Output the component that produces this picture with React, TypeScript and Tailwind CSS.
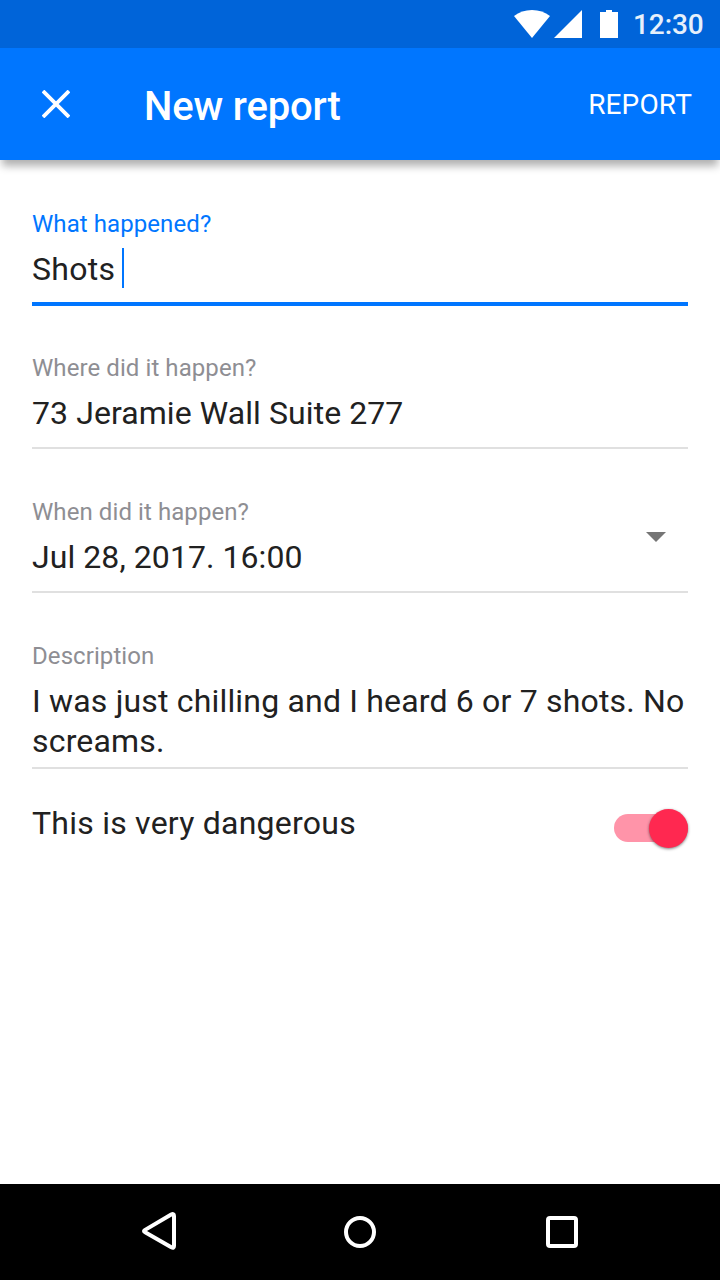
import React from "react";

function StatusBar() {
  return (
    <div className="relative z-10 flex h-12 items-center bg-[#0064d9] pl-[514px] text-white">
      <svg width="36" height="28" viewBox="0 0 36 28" fill="#fff" className="shrink-0">
        <path d="M18 28 0 6C5 2 11 0 18 0s13 2 18 6z" />
      </svg>
      <svg width="28" height="28" viewBox="0 0 28 28" fill="#fff" className="ml-1 shrink-0">
        <path d="M28 0v28H0z" />
      </svg>
      <svg width="18" height="28" viewBox="0 0 18 28" fill="#fff" className="ml-[18px] shrink-0">
        <path d="M6 0h6v2h6v26H0V2h6z" />
      </svg>
      <span className="ml-[15px] pt-0.5 text-[28px] leading-8 font-medium tracking-[-0.1px] text-[#e6f0fb]">12:30</span>
    </div>
  );
}

function AppBar() {
  return (
    <header className="flex h-28 items-center bg-[#0076ff] pr-7 pl-[42px] text-white shadow-[0_8px_8px_-2px_rgba(0,0,0,0.31)]">
      <svg width="28" height="28" viewBox="0 0 28 28" stroke="#fff" strokeWidth="3.8" className="shrink-0">
        <path d="M1 1 27 27M27 1 1 27" />
      </svg>
      <h1 className="ml-[74px] pt-1.5 text-[40px] leading-[48px] font-medium tracking-[-0.15px]">New report</h1>
      <button className="ml-auto pt-0.5 text-[28px] leading-8 tracking-[0.15px]">REPORT</button>
    </header>
  );
}

type FieldProps = { label: string; value: string; active?: boolean; dropdown?: boolean; className: string };

function Field({ label, value, active, dropdown, className }: FieldProps) {
  return (
    <div className={`${className} flex ${active ? "border-b-4 border-[#0076ff]" : "border-b-2 border-[#e0e0e0]"}`}>
      <div className="grow">
        <div className={`text-2xl leading-7 tracking-[0.08px] ${active ? "text-[#0076ff]" : "text-[#8e8e93]"}`}>{label}</div>
        <div className="mt-2.5 flex text-[32px] leading-10">
          <span className="relative top-px">{value}</span>
          {active && <span className="ml-[7px] h-10 w-0.5 bg-[#0076ff]" />}
        </div>
      </div>
      {dropdown && (
        <svg width="20" height="10" viewBox="0 0 20 10" fill="#757575" className="mt-[34px] mr-[22px]">
          <path d="M0 0h20L10 10z" />
        </svg>
      )}
    </div>
  );
}

function NavBar() {
  return (
    <nav className="flex h-24 items-center bg-black pl-[142px]">
      <svg width="34" height="38" viewBox="0 0 34 38" fill="none" stroke="#fff" strokeWidth="4" strokeLinejoin="round" className="mb-0.5">
        <path d="M2.7 18.1 29.2 2.5Q32 1.2 32 4v30Q32 36.6 29.3 35.3L2.7 19.9Q1.3 19 2.7 18.1z" />
      </svg>
      <svg width="32" height="32" viewBox="0 0 32 32" fill="none" stroke="#fff" strokeWidth="4" className="ml-[168px]">
        <circle cx="16" cy="16" r="14" />
      </svg>
      <svg width="32" height="32" viewBox="0 0 32 32" fill="none" stroke="#fff" strokeWidth="4" className="ml-[170px]">
        <rect x="2" y="2" width="28" height="28" rx="2" />
      </svg>
    </nav>
  );
}

export default function App() {
  return (
    <div className="flex h-[1280px] w-[720px] flex-col overflow-hidden bg-white font-['Roboto',sans-serif] text-[#212121]">
      <StatusBar />
      <AppBar />
      <main className="flex grow flex-col px-8 pt-[50px]">
        <Field label="What happened?" value="Shots" active className="h-24 tracking-[0.3px]" />
        <Field label="Where did it happen?" value="73 Jeramie Wall Suite 277" className="mt-12 h-[95px] tracking-[0.08px]" />
        <Field label="When did it happen?" value="Jul 28, 2017. 16:00" dropdown className="mt-[49px] h-[95px] tracking-[0.07px]" />
        <Field label="Description" value="I was just chilling and I heard 6 or 7 shots. No screams." className="mt-[49px] h-[127px] tracking-[0.18px]" />
        <div className="mt-[34px] flex justify-between">
          <span className="text-[32px] leading-10 tracking-[0.24px]">This is very dangerous</span>
          <span className="mt-[11px] flex h-7 w-[74px] items-center justify-end rounded-full bg-[#ff94a9]">
            <span className="mr-[0.4px] size-[39px] shrink-0 rounded-full bg-[#ff2850] shadow-[0_1px_3px_rgba(0,0,0,0.5)]" />
          </span>
        </div>
      </main>
      <NavBar />
    </div>
  );
}
